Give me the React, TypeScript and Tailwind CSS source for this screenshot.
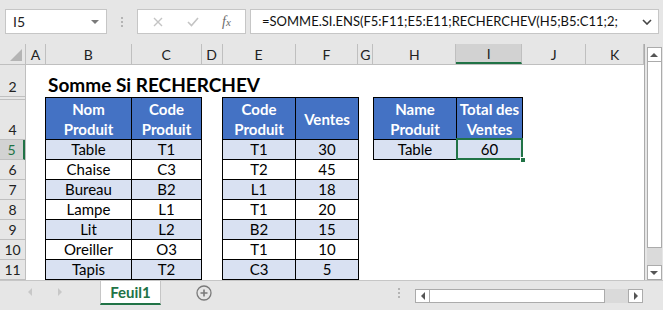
import React from "react";

const font = { fontFamily: "Lato, 'Open Sans', Arial, sans-serif" };

// column headers (width includes the 1px right border)
const columns: { label: string; w: string; active?: boolean }[] = [
  { label: "A", w: "w-[20px]" },
  { label: "B", w: "w-[86px]" },
  { label: "C", w: "w-[70px]" },
  { label: "D", w: "w-[21px]" },
  { label: "E", w: "w-[73px]" },
  { label: "F", w: "w-[63px]" },
  { label: "G", w: "w-[15px]" },
  { label: "H", w: "w-[83px]" },
  { label: "I", w: "w-[66px]", active: true },
  { label: "J", w: "w-[64px]" },
  { label: "K", w: "w-[58px]" },
];

const rowHeads: { label: string; h: string; active?: boolean }[] = [
  { label: "2", h: "h-[32px]" },
  { label: "", h: "h-[3px]" },
  { label: "4", h: "h-[40px]" },
  { label: "5", h: "h-[20px]", active: true },
  { label: "6", h: "h-[20px]" },
  { label: "7", h: "h-[20px]" },
  { label: "8", h: "h-[20px]" },
  { label: "9", h: "h-[20px]" },
  { label: "10", h: "h-[20px]" },
  { label: "11", h: "h-[20px]" },
];

const produits = [
  ["Table", "T1"],
  ["Chaise", "C3"],
  ["Bureau", "B2"],
  ["Lampe", "L1"],
  ["Lit", "L2"],
  ["Oreiller", "O3"],
  ["Tapis", "T2"],
];

const ventes = [
  ["T1", "30"],
  ["T2", "45"],
  ["L1", "18"],
  ["T1", "20"],
  ["B2", "15"],
  ["T1", "10"],
  ["C3", "5"],
];

function DataTable({
  heads,
  widths,
  rows,
  selected,
}: {
  heads: string[][];
  widths: string[];
  rows: string[][];
  selected?: [number, number];
}) {
  return (
    <div className="flex flex-col border-l border-t border-black">
      <div className="flex h-[42px]">
        {heads.map((h, i) => (
          <div
            key={i}
            className={`${widths[i]} flex flex-col items-center justify-center border-b border-r border-black bg-[#4472c4] text-[15px] font-bold leading-[20px] text-white`}
          >
            {h.map((line) => (
              <span key={line}>{line}</span>
            ))}
          </div>
        ))}
      </div>
      {rows.map((r, ri) => (
        <div key={ri} className="flex h-[20px]">
          {r.map((c, ci) => (
            <div
              key={ci}
              className={`${widths[ci]} relative flex items-center justify-center border-b border-r border-black text-[15px] leading-none text-black ${
                ri % 2 === 0 ? "bg-[#d9e1f2]" : "bg-white"
              }`}
            >
              {c}
              {selected && selected[0] === ri && selected[1] === ci && (
                <>
                  <span className="absolute -left-[1px] -top-[2px] h-[22px] w-[67px] border-2 border-[#217346]" />
                  <span className="absolute -bottom-[4px] -right-[4px] h-[6px] w-[6px] border border-white bg-[#217346]" />
                </>
              )}
            </div>
          ))}
        </div>
      ))}
    </div>
  );
}

function Tri({ dir, color = "#444" }: { dir: "up" | "down" | "left" | "right"; color?: string }) {
  const pts = {
    up: "0,5 4,1 8,5",
    down: "0,1 8,1 4,5",
    left: "5,0 5,8 1,4",
    right: "1,0 1,8 5,4",
  }[dir];
  const vb = dir === "up" || dir === "down" ? "0 0 8 6" : "0 0 6 8";
  const cls = dir === "up" || dir === "down" ? "h-[6px] w-[8px]" : "h-[8px] w-[6px]";
  return (
    <svg viewBox={vb} className={cls}>
      <polygon points={pts} fill={color} />
    </svg>
  );
}

function Toolbar() {
  return (
    <div className="flex h-[44px] items-start pt-[9px] pl-[5px]">
      <div className="flex h-[25px] w-[102px] items-center justify-between border border-[#c6c6c6] bg-white pl-[7px] pr-[7px] text-[14px] text-[#222]">
        <span>I5</span>
        <Tri dir="down" color="#7a7a7a" />
      </div>
      <div className="flex h-[25px] w-[30px] flex-col items-center justify-center gap-[2px]">
        <span className="h-[2px] w-[2px] bg-[#b4b4b4]" />
        <span className="h-[2px] w-[2px] bg-[#b4b4b4]" />
        <span className="h-[2px] w-[2px] bg-[#b4b4b4]" />
      </div>
      <div className="flex h-[25px] w-[109px] items-center border border-[#c6c6c6] bg-white">
        <svg viewBox="0 0 10 10" className="ml-[15px] h-[10px] w-[10px]">
          <path d="M1 1 L9 9 M9 1 L1 9" stroke="#c4c4c4" strokeWidth="1.4" />
        </svg>
        <svg viewBox="0 0 12 10" className="ml-[24px] h-[10px] w-[12px]">
          <path d="M1 5 L4.5 8.5 L11 1" stroke="#c4c4c4" strokeWidth="1.6" fill="none" />
        </svg>
        <span
          className="ml-[23px] text-[14px] italic text-[#6b6b6b]"
          style={{ fontFamily: "'Liberation Serif', 'DejaVu Serif', serif" }}
        >
          f<span className="text-[11px]">x</span>
        </span>
      </div>
      <div className="ml-[4px] flex h-[25px] w-[409px] items-center justify-between border border-[#c6c6c6] bg-white pl-[11px] pr-[6px] text-[13px] text-[#111]">
        <span>=SOMME.SI.ENS(F5:F11;E5:E11;RECHERCHEV(H5;B5:C11;2;</span>
        <svg viewBox="0 0 10 6" className="h-[6px] w-[10px]">
          <path d="M1 1 L5 5 L9 1" stroke="#444" strokeWidth="1.6" fill="none" />
        </svg>
      </div>
    </div>
  );
}

function Sheet() {
  return (
    <div className="flex w-[645px] flex-col border-r border-[#ababab]">
      {/* column headers */}
      <div className="flex h-[21px] border-b border-[#bfbfbf] text-[14px] text-[#222]">
        <div className="flex w-[26px] items-end justify-end border-r border-[#bfbfbf] pb-[3px] pr-[3px]">
          <svg viewBox="0 0 12 12" className="h-[12px] w-[12px]">
            <polygon points="12,0 12,12 0,12" fill="#b4b4b4" />
          </svg>
        </div>
        {columns.map((c) => (
          <div
            key={c.label}
            className={`${c.w} flex items-center justify-center border-r border-[#bfbfbf] ${
              c.active ? "border-b-2 border-b-[#217346] bg-[#d2d2d2]" : ""
            }`}
          >
            {c.label}
          </div>
        ))}
      </div>
      <div className="flex flex-1">
        {/* row headers */}
        <div className="flex w-[26px] flex-col border-r border-[#bfbfbf] text-[14px] text-[#222]">
          {rowHeads.map((r, i) => (
            <div
              key={i}
              className={`${r.h} flex items-end justify-center border-b border-[#bfbfbf] leading-[18px] ${
                r.active ? "border-r-2 border-r-[#217346] bg-[#d2d2d2] text-[#217346]" : ""
              }`}
            >
              {r.label}
            </div>
          ))}
        </div>
        {/* cells */}
        <div className="flex flex-1 flex-col bg-white">
          <div className="flex h-[32px] items-end pb-[3px] pl-[22px] text-[19px] font-bold leading-none text-black">
            Somme Si RECHERCHEV
          </div>
          <div className="flex items-start pl-[19px]">
            <DataTable
              heads={[["Nom", "Produit"], ["Code", "Produit"]]}
              widths={["w-[86px]", "w-[70px]"]}
              rows={produits}
            />
            <div className="w-[20px]" />
            <DataTable
              heads={[["Code", "Produit"], ["Ventes"]]}
              widths={["w-[73px]", "w-[63px]"]}
              rows={ventes}
            />
            <div className="w-[14px]" />
            <DataTable
              heads={[["Name", "Produit"], ["Total des", "Ventes"]]}
              widths={["w-[83px]", "w-[66px]"]}
              rows={[["Table", "60"]]}
              selected={[0, 1]}
            />
          </div>
        </div>
      </div>
    </div>
  );
}

function VScroll() {
  return (
    <div className="flex w-[18px] flex-col items-center pt-[3px]">
      <div className="flex h-[15px] w-[15px] items-center justify-center border border-[#ababab] bg-white">
        <Tri dir="up" color="#555" />
      </div>
      <div className="h-[186px] w-[15px] border border-t-0 border-[#ababab] bg-white" />
      <div className="w-[15px] flex-1 bg-[#dadada]" />
      <div className="flex h-[15px] w-[15px] items-center justify-center border border-[#ababab] bg-white">
        <Tri dir="down" color="#555" />
      </div>
    </div>
  );
}

function TabBar() {
  return (
    <div className="flex h-[30px] items-start border-t border-[#c6c6c6]">
      <div className="flex h-[22px] w-[100px] items-center pl-[27px]">
        <Tri dir="left" color="#c8c8c8" />
        <div className="w-[24px]" />
        <Tri dir="right" color="#c8c8c8" />
      </div>
      <div className="flex h-[24px] w-[61px] items-center justify-center border-x border-b-2 border-[#c6c6c6] border-b-[#217346] bg-white text-[15px] font-bold text-[#217346]">
        Feuil1
      </div>
      <div className="flex h-[22px] w-[86px] items-center justify-center">
        <svg viewBox="0 0 16 16" className="mt-[2px] h-[16px] w-[16px]">
          <circle cx="8" cy="8" r="7" stroke="#7a7a7a" strokeWidth="1.3" fill="none" />
          <path d="M8 4.5 V11.5 M4.5 8 H11.5" stroke="#7a7a7a" strokeWidth="1.6" />
        </svg>
      </div>
      <div className="flex h-[24px] w-[168px] items-center justify-end pr-[15px]">
        <div className="flex flex-col gap-[2px]">
          <span className="h-[2px] w-[2px] bg-[#b4b4b4]" />
          <span className="h-[2px] w-[2px] bg-[#b4b4b4]" />
          <span className="h-[2px] w-[2px] bg-[#b4b4b4]" />
        </div>
      </div>
      <div className="mt-[8px] flex h-[14px] w-[228px]">
        <div className="flex w-[15px] items-center justify-center border border-[#ababab] bg-white">
          <Tri dir="left" color="#555" />
        </div>
        <div className="w-[175px] border-y border-r border-[#ababab] bg-white" />
        <div className="flex-1 bg-[#dadada]" />
        <div className="flex w-[15px] items-center justify-center border border-[#ababab] bg-white">
          <Tri dir="right" color="#555" />
        </div>
      </div>
    </div>
  );
}

export default function App() {
  return (
    <div className="flex h-[310px] w-[663px] flex-col overflow-hidden bg-[#e6e6e6]" style={font}>
      <Toolbar />
      <div className="flex h-[236px]">
        <Sheet />
        <VScroll />
      </div>
      <TabBar />
    </div>
  );
}
